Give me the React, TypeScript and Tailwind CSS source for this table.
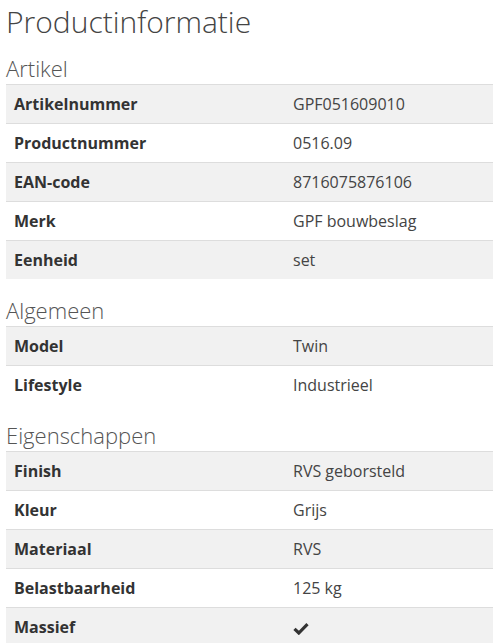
type Row = { label: string; value: string | null };

const sections: { title: string; rows: Row[] }[] = [
  {
    title: "Artikel",
    rows: [
      { label: "Artikelnummer", value: "GPF051609010" },
      { label: "Productnummer", value: "0516.09" },
      { label: "EAN-code", value: "8716075876106" },
      { label: "Merk", value: "GPF bouwbeslag" },
      { label: "Eenheid", value: "set" },
    ],
  },
  {
    title: "Algemeen",
    rows: [
      { label: "Model", value: "Twin" },
      { label: "Lifestyle", value: "Industrieel" },
    ],
  },
  {
    title: "Eigenschappen",
    rows: [
      { label: "Finish", value: "RVS geborsteld" },
      { label: "Kleur", value: "Grijs" },
      { label: "Materiaal", value: "RVS" },
      { label: "Belastbaarheid", value: "125 kg" },
      { label: "Massief", value: null },
    ],
  },
];

function Check() {
  return (
    <svg width="16" height="13" viewBox="0 0 16 13" className="mt-[2px]">
      <path d="M1.5 6.8 L5.8 11 L14.5 2.2" fill="none" stroke="#333" strokeWidth="3.2" strokeLinejoin="miter" />
    </svg>
  );
}

function App() {
  return (
    <div className="h-[643px] overflow-hidden bg-white pl-[6px] font-['Open_Sans',sans-serif] text-[#333]">
      <h1 className="pt-[2px] text-[30px] font-light leading-[40px] text-[#444]">Productinformatie</h1>
      {sections.map((s, i) => (
        <div key={s.title} className={i === 0 ? "mt-[12px]" : "mt-[17px]"}>
          <h2 className="text-[22px] font-light leading-[28px] text-[#555]">{s.title}</h2>
          <table className="mt-[2px] w-full border-collapse text-[16px]">
            <tbody>
              {s.rows.map((r, j) => (
                <tr key={r.label} className={j % 2 === 0 ? "bg-[#f1f1f1]" : "bg-white"}>
                  <td className="w-[279px] border-t border-[#dddddd] px-2 py-2 font-bold leading-[22px] text-[#333]">
                    {r.label}
                  </td>
                  <td className="border-t border-[#dddddd] px-2 py-2 leading-[22px] text-[#444]">
                    {r.value === null ? <Check /> : r.value}
                  </td>
                </tr>
              ))}
            </tbody>
          </table>
        </div>
      ))}
    </div>
  );
}

export default App;
